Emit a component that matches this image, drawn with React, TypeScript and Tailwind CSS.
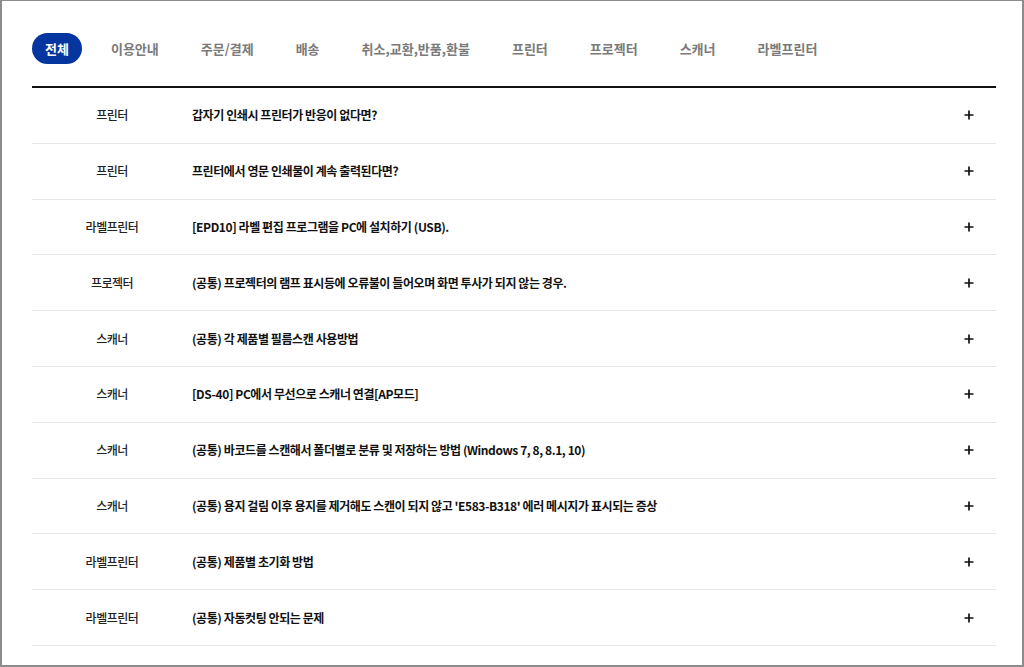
import React, { useState } from 'react';

type Faq = {
    category: string;
    title: string;
};

const tabs = ['전체', '이용안내', '주문/결제', '배송', '취소,교환,반품,환불', '프린터', '프로젝터', '스캐너', '라벨프린터'];

const faqs: Faq[] = [
    { category: '프린터', title: '갑자기 인쇄시 프린터가 반응이 없다면?' },
    { category: '프린터', title: '프린터에서 영문 인쇄물이 계속 출력된다면?' },
    { category: '라벨프린터', title: '[EPD10] 라벨 편집 프로그램을 PC에 설치하기 (USB).' },
    { category: '프로젝터', title: '(공통) 프로젝터의 램프 표시등에 오류불이 들어오며 화면 투사가 되지 않는 경우.' },
    { category: '스캐너', title: '(공통) 각 제품별 필름스캔 사용방법' },
    { category: '스캐너', title: '[DS-40] PC에서 무선으로 스캐너 연결[AP모드]' },
    { category: '스캐너', title: '(공통) 바코드를 스캔해서 폴더별로 분류 및 저장하는 방법 (Windows 7, 8, 8.1, 10)' },
    { category: '스캐너', title: "(공통) 용지 걸림 이후 용지를 제거해도 스캔이 되지 않고 'E583-B318' 에러 메시지가 표시되는 증상" },
    { category: '라벨프린터', title: '(공통) 제품별 초기화 방법' },
    { category: '라벨프린터', title: '(공통) 자동컷팅 안되는 문제' },
];

const PlusIcon = () => (
    <svg width="10" height="10" viewBox="0 0 10 10" fill="none">
        <path d="M5 0.5v9M0.5 5h9" stroke="#111" strokeWidth="1.7" />
    </svg>
);

const App: React.FC = () => {
    const [activeTab, setActiveTab] = useState(0);

    return (
        <div
            className="w-[1024px] h-[667px] bg-white border-x-2 border-b-2 border-t border-[#8c8c8c] overflow-hidden"
            style={{ fontFamily: '"Noto Sans CJK KR", "Noto Sans", sans-serif' }}
        >
            <div className="pl-[30px] pr-[26px] pt-[32px]">
                {/* category tabs */}
                <div className="flex items-center gap-[16px] h-[31px]">
                    {tabs.map((tab, index) => (
                        <button
                            key={tab}
                            onClick={() => setActiveTab(index)}
                            className={`h-[31px] px-[13px] rounded-full text-[13px] font-bold leading-none ${activeTab === index ? 'bg-[#0536a0] text-white' : 'text-[#7a7a7a]'}`}
                        >
                            {tab}
                        </button>
                    ))}
                </div>

                {/* question list */}
                <div className="mt-[22px] border-t-2 border-[#111]">
                    {faqs.map((faq, index) => (
                        <div key={index} className="h-[55.8px] flex items-center border-b border-[#e6e6e6]">
                            <div className="w-[160px] text-center text-[12px] font-medium text-[#222] tracking-[-0.04em]">{faq.category}</div>
                            <div className="flex-1 text-[12px] font-bold text-[#111] tracking-[-0.035em]">{faq.title}</div>
                            <div className="w-[54px] flex justify-center">
                                <PlusIcon />
                            </div>
                        </div>
                    ))}
                </div>
            </div>
        </div>
    );
};

export default App;
